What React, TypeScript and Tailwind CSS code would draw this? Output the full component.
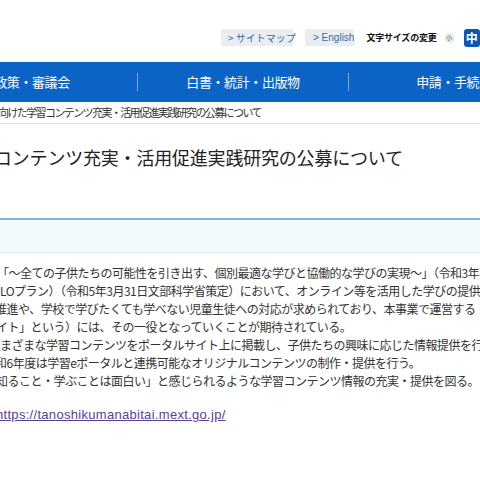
const jp = "font-['Noto_Sans_CJK_JP','Noto_Sans',sans-serif]";

const navItems = ['政策・審議会', '白書・統計・出版物', '申請・手続き'];

const bodyLines: { text: string; shift: string }[] = [
  { text: '「～全ての子供たちの可能性を引き出す、個別最適な学びと協働的な学びの実現～」（令和3年', shift: 'ml-[-3px]' },
  { text: 'LOプラン）（令和5年3月31日文部科学省策定）において、オンライン等を活用した学びの提供を', shift: 'ml-[0px]' },
  { text: '推進や、学校で学びたくても学べない児童生徒への対応が求められており、本事業で運営する', shift: 'ml-[-5px]' },
  { text: 'イト」という）には、その一役となっていくことが期待されている。', shift: 'ml-[-4px]' },
  { text: 'まざまな学習コンテンツをポータルサイト上に掲載し、子供たちの興味に応じた情報提供を行', shift: 'ml-[0px]' },
  { text: '和6年度は学習eポータルと連携可能なオリジナルコンテンツの制作・提供を行う。', shift: 'ml-[-5px]' },
  { text: '知ること・学ぶことは面白い」と感じられるような学習コンテンツ情報の充実・提供を図る。', shift: 'ml-[-4px]' },
];

function HeaderTools() {
  return (
    <div className="h-[62px] flex items-start pt-[29px] pl-[221px]">
      <a className="h-[17px] w-[72px] bg-[#eaeef2] text-[#3b6aa0] text-[10px] leading-[17px] pl-[7px] whitespace-nowrap">
        &gt; サイトマップ
      </a>
      <a className="ml-[12px] h-[17px] w-[52px] bg-[#eaeef2] text-[#3b6aa0] text-[10px] leading-[17px] pl-[8px] whitespace-nowrap font-['Liberation_Sans',sans-serif]">
        &gt; English
      </a>
      <span className="ml-[12px] text-[9px] leading-[18px] font-bold text-[#111] whitespace-nowrap tracking-[-0.2px]">
        文字サイズの変更
      </span>
      <span className="ml-[8px] mt-[4px] w-[10px] h-[10px] rounded-full bg-[#e2ebe6] text-[6px] leading-[10px] text-center text-[#2f6b3a]">
        小
      </span>
      <span className="ml-[10px] w-[18px] h-[18px] rounded-[3px] bg-[#0b58b0] text-white text-[12px] leading-[18px] text-center font-bold">
        中
      </span>
    </div>
  );
}

function GlobalNav() {
  return (
    <nav className="h-[40px] bg-[#0b63c6] flex items-center ml-[-73px] w-[640px]">
      {navItems.map((item, i) => (
        <div key={item} className="flex items-center">
          {i > 0 && <span className="w-px h-[18px] bg-[#7aa9dd]" />}
          <span className="w-[210px] text-center text-white text-[13px] tracking-[-0.4px] whitespace-nowrap">
            {item}
          </span>
        </div>
      ))}
    </nav>
  );
}

export default function App() {
  return (
    <div className={`w-[480px] h-[480px] overflow-hidden bg-white ${jp}`}>
      <HeaderTools />
      <GlobalNav />

      {/* breadcrumb */}
      <div className="h-[22px] border-b border-[#dcdcdc] flex items-center">
        <p className="ml-[-2px] text-[11px] tracking-[-1.6px] text-[#333] whitespace-nowrap">
          向けた学習コンテンツ充実・活用促進実践研究の公募について
        </p>
      </div>

      <h1 className="mt-[20px] ml-[-6px] text-[18px] leading-[26px] text-[#222] whitespace-nowrap tracking-[-0.2px]">
        コンテンツ充実・活用促進実践研究の公募について
      </h1>

      {/* summary box */}
      <div className="mt-[48px] h-[35px] border-t-2 border-[#7cb8cf] border-b border-b-[#dfe9ee] bg-[#f2f9fc]" />

      <div className="mt-[11px] text-[12px] leading-[18px] text-[#333] tracking-[-0.5px]">
        {bodyLines.map((line) => (
          <p key={line.text} className={`whitespace-nowrap ${line.shift}`}>
            {line.text}
          </p>
        ))}
        <p className="mt-[16px] ml-[-4px] font-['Liberation_Sans',sans-serif] text-[13px] tracking-[0.3px]">
          <a className="text-[#5a3f96] underline">https://tanoshikumanabitai.mext.go.jp/</a>
        </p>
      </div>
    </div>
  );
}
